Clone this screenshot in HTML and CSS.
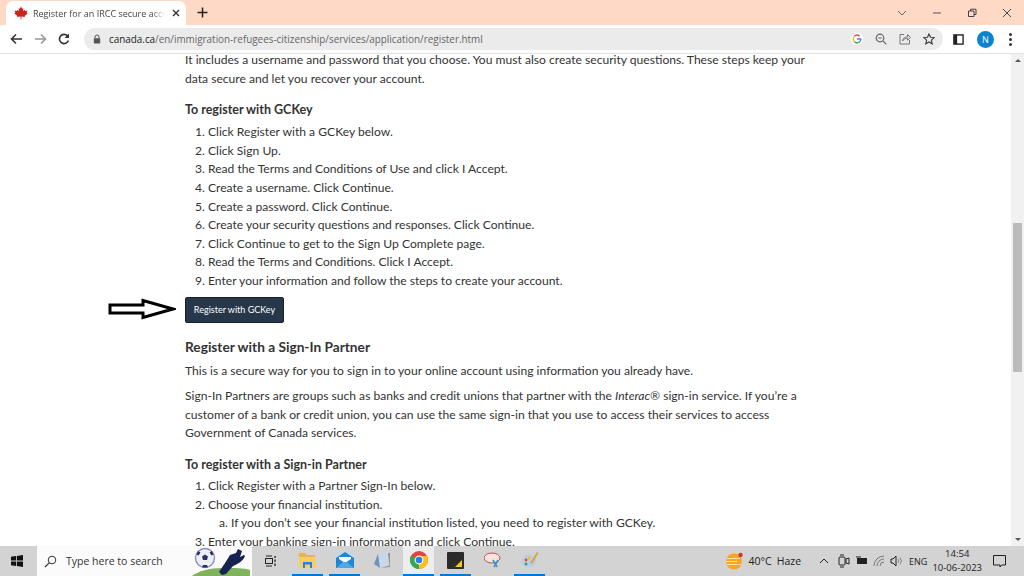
FILE: index.html
```html
<!DOCTYPE html>
<html lang="en">
<head>
    <meta charset="UTF-8">
    <title>Register for an IRCC secure account</title>
    <link rel="stylesheet" href="styles.css">
</head>
<body>
    <div class="screen">
        <div class="tabstrip">
            <div class="tab">
                <svg class="flag" width="14" height="14" viewBox="0 0 14 14"><path d="M7 0.5 8.2 2.8 9.4 2.2 9 5.2 10.6 3.8 11 4.9 13.4 4.6 12.7 6.8 13.6 7.4 10.6 9.9 11 11 7.4 10.6 7.4 13.5 6.6 13.5 6.6 10.6 3 11 3.4 9.9 0.4 7.4 1.3 6.8 0.6 4.6 3 4.9 3.4 3.8 5 5.2 4.6 2.2 5.8 2.8Z" fill="#c8261c"/></svg>
                <span class="tab-title">Register for an IRCC secure account</span>
                <svg class="tab-x" width="8" height="8" viewBox="0 0 8 8"><path d="M1 1 7 7M7 1 1 7" stroke="#333" stroke-width="1.4"/></svg>
            </div>
            <svg class="new-tab" width="11" height="11" viewBox="0 0 11 11"><path d="M5.5 0.5V10.5M0.5 5.5H10.5" stroke="#222" stroke-width="1.5"/></svg>
            <div class="win-controls">
                <svg width="10" height="6" viewBox="0 0 10 6"><path d="M1 1 5 5 9 1" fill="none" stroke="#666" stroke-width="1"/></svg>
                <svg width="10" height="10" viewBox="0 0 10 10"><path d="M1 5H9" stroke="#555" stroke-width="1"/></svg>
                <svg width="10" height="10" viewBox="0 0 10 10"><path d="M1.5 3H7V8.5H1.5ZM3.5 3V1.2H9V6.5H7" fill="none" stroke="#444" stroke-width="1"/></svg>
                <svg width="10" height="10" viewBox="0 0 10 10"><path d="M1 1 9 9M9 1 1 9" stroke="#444" stroke-width="1"/></svg>
            </div>
        </div>

        <div class="toolbar">
            <svg width="13" height="12" viewBox="0 0 13 12"><path d="M12 6H2M6 1.5 1.5 6 6 10.5" fill="none" stroke="#333" stroke-width="1.6"/></svg>
            <svg width="13" height="12" viewBox="0 0 13 12"><path d="M1 6H11M7 1.5 11.5 6 7 10.5" fill="none" stroke="#999" stroke-width="1.6"/></svg>
            <svg width="12" height="12" viewBox="0 0 12 12"><path d="M10.4 7.5A4.6 4.6 0 1 1 9.4 2.8" fill="none" stroke="#333" stroke-width="1.6"/><path d="M11 0.5V5H6.5Z" fill="#333"/></svg>
            <div class="omnibox">
                <svg class="lock" width="8" height="10" viewBox="0 0 8 10"><path d="M2 4.5V3A2 2 0 0 1 6 3V4.5" fill="none" stroke="#555" stroke-width="1"/><rect x="0.8" y="4.2" width="6.4" height="5.2" rx="0.7" fill="#555"/></svg>
                <span class="url"><b>canada.ca</b>/en/immigration-refugees-citizenship/services/application/register.html</span>
                <div class="omni-icons">
                    <svg width="12" height="12" viewBox="0 0 12 12"><circle cx="6" cy="6" r="6" fill="#fff"/><path d="M3.4 3.3A3.8 3.8 0 0 1 8.6 3.2" fill="none" stroke="#e8433a" stroke-width="1.4"/><path d="M3.4 3.3A3.8 3.8 0 0 0 3.4 8.7" fill="none" stroke="#f5b914" stroke-width="1.4"/><path d="M3.4 8.7A3.8 3.8 0 0 0 8.6 8.7" fill="none" stroke="#34a853" stroke-width="1.4"/><path d="M6 6H9.8A3.8 3.8 0 0 1 8.6 8.7" fill="none" stroke="#4285f4" stroke-width="1.4"/></svg>
                    <svg width="12" height="12" viewBox="0 0 12 12"><circle cx="5" cy="5" r="3.8" fill="none" stroke="#666" stroke-width="1.2"/><path d="M8 8 11.3 11.3M3.2 5H6.8" stroke="#666" stroke-width="1.2"/></svg>
                    <svg width="12" height="12" viewBox="0 0 12 12"><path d="M5 1.5H1V11H10.5V7" fill="none" stroke="#777" stroke-width="1"/><path d="M3.5 8C4 5 6 3.8 8.5 3.8V1.5L11.5 4.5 8.5 7.2V5.2C6.5 5.2 5 6 3.5 8Z" fill="none" stroke="#777" stroke-width="1"/></svg>
                    <svg width="12" height="12" viewBox="0 0 12 12"><path d="M6 1 7.5 4.3 11.2 4.7 8.4 7.1 9.2 10.8 6 8.9 2.8 10.8 3.6 7.1 0.8 4.7 4.5 4.3Z" fill="none" stroke="#444" stroke-width="1.2"/></svg>
                </div>
            </div>
            <svg class="side-icon" width="11" height="11" viewBox="0 0 12 12"><rect x="1" y="1" width="10" height="10" fill="#fff" stroke="#222" stroke-width="1.5"/><rect x="1" y="1" width="3.5" height="10" fill="#222"/></svg>
            <div class="avatar">N</div>
            <div class="kebab"><i></i><i></i><i></i></div>
        </div>

        <div class="viewport">
            <main class="page">
                <p class="intro">It includes a username and password that you choose. You must also create security questions. These steps keep your data secure and let you recover your account.</p>
                <h3>To register with GCKey</h3>
                <ol>
                    <li>Click Register with a GCKey below.</li>
                    <li>Click Sign Up.</li>
                    <li>Read the Terms and Conditions of Use and click I Accept.</li>
                    <li>Create a username. Click Continue.</li>
                    <li>Create a password. Click Continue.</li>
                    <li>Create your security questions and responses. Click Continue.</li>
                    <li>Click Continue to get to the Sign Up Complete page.</li>
                    <li>Read the Terms and Conditions. Click I Accept.</li>
                    <li>Enter your information and follow the steps to create your account.</li>
                </ol>
                <div class="btn-row">
                    <svg class="arrow" width="68" height="22" viewBox="0 0 68 22"><path d="M2 7H35V2.5L65 11 35 19.5V15H2Z" fill="#fff" stroke="#000" stroke-width="3"/></svg>
                    <a class="btn">Register with GCKey</a>
                </div>
                <h2>Register with a Sign-In Partner</h2>
                <p>This is a secure way for you to sign in to your online account using information you already have.</p>
                <p>Sign-In Partners are groups such as banks and credit unions that partner with the <em>Interac</em>® sign-in service. If you’re a customer of a bank or credit union, you can use the same sign-in that you use to access their services to access Government of Canada services.</p>
                <h3 class="second">To register with a Sign-in Partner</h3>
                <ol>
                    <li>Click Register with a Partner Sign-In below.</li>
                    <li>Choose your financial institution.
                        <ol class="alpha"><li>If you don’t see your financial institution listed, you need to register with GCKey.</li></ol>
                    </li>
                    <li>Enter your banking sign-in information and click Continue.</li>
                </ol>
            </main>
            <div class="scrollbar">
                <span class="sb-up"></span>
                <div class="sb-track"><div class="sb-thumb"></div></div>
                <span class="sb-down"></span>
            </div>
        </div>

        <div class="taskbar">
            <svg class="start" width="12" height="12" viewBox="0 0 12 12"><path d="M0 1.7 5 1V5.6H0ZM5.8 0.9 12 0V5.6H5.8ZM0 6.4H5V11L0 10.3ZM5.8 6.4H12V12L5.8 11.1Z" fill="#111"/></svg>
            <div class="search">
                <svg width="13" height="13" viewBox="0 0 13 13"><circle cx="8" cy="5" r="3.8" fill="none" stroke="#333" stroke-width="1"/><path d="M5.2 7.8 1 12" stroke="#333" stroke-width="1.2"/></svg>
                <span>Type here to search</span>
                <svg class="search-art" width="60" height="30" viewBox="0 0 60 30"><path d="M0 30C6 25 18 22 30 22 42 22 52 22 58 24V30Z" fill="#7fb35c"/><circle cx="13" cy="12" r="9.5" fill="#eceef8" stroke="#8c90c0" stroke-width="1.4"/><path d="M13 8.5 16 10.5 15 14H11L10 10.5ZM6 5 8.5 6.5 6.5 9.5 4.5 8.5ZM20 5 21.5 8.5 19.5 9.5 17.5 6.5ZM10 21.5 11 19H15L16 21.5Z" fill="#2c3163"/><path d="M27 26C31 20 35 14 38 9L44 7 46 3 50 5 48 11 52 9 53 10C51 15 46 18 41 20L34 28 30 29Z" fill="#16224f"/></svg>
            </div>
            <svg class="task-view" width="12" height="12" viewBox="0 0 12 12"><path d="M2 1H8M2 11H8" stroke="#222"/><rect x="1.5" y="3.5" width="7" height="5" fill="none" stroke="#222"/><path d="M11 1V3M11 4.5V7M11 8.5V11" stroke="#222" stroke-width="1.3"/></svg>
            <div class="task-apps">
                <div class="app open"><svg width="17" height="15" viewBox="0 0 17 15"><path d="M0 0H6L8 2H16V5H0Z" fill="#e9b44c"/><path d="M0 4H17V15H0Z" fill="#f8cf5f"/><path d="M4 9H13V15H11V11.5H6V15H4Z" fill="#1f87d8"/></svg></div>
                <div class="app open"><svg width="18" height="16" viewBox="0 0 18 16"><path d="M0 6 9 0 18 6V16H0Z" fill="#1b87d6"/><path d="M3 5H15V7L9 11 3 7Z" fill="#fff"/><path d="M0 16 7 10H11L18 16Z" fill="#4fa8e8"/></svg></div>
                <div class="app"><svg width="16" height="17" viewBox="0 0 16 17"><path d="M4 2 15 0 16 13 6 16Z" fill="#c6d8ea"/><path d="M0 12 4 2 6 16Z" fill="#6f93b8"/><path d="M14 1 15.5 13.5 7 16 16 15 16 1Z" fill="#9a8f80"/></svg></div>
                <div class="app open active"><svg width="18" height="18" viewBox="0 0 18 18"><circle cx="9" cy="9" r="9" fill="#e8433a"/><path d="M9 9 1.2 4.5A9 9 0 0 0 9 18Z" fill="#34a853"/><path d="M9 9 9 18A9 9 0 0 0 17 5H9Z" fill="#fbc116"/><circle cx="9" cy="9" r="4.4" fill="#fff"/><circle cx="9" cy="9" r="3.3" fill="#2a7de1"/></svg></div>
                <div class="app open"><svg width="17" height="17" viewBox="0 0 17 17"><rect width="17" height="17" rx="1" fill="#2b2b2b"/><path d="M8 15 15 8V15Z" fill="#f7c51e"/></svg></div>
                <div class="app"><svg width="17" height="16" viewBox="0 0 17 16"><ellipse cx="8" cy="6" rx="8" ry="5" fill="#f4e3df" stroke="#c05050"/><path d="M9 8 13 15M14 8 10 15" stroke="#3a8fd0" stroke-width="1.6"/></svg></div>
                <div class="app open"><svg width="18" height="18" viewBox="0 0 18 18"><ellipse cx="8" cy="10" rx="7.5" ry="6.5" fill="#b8cfe6"/><circle cx="5" cy="9" r="1.4" fill="#e8433a"/><circle cx="8" cy="7" r="1.4" fill="#f5b914"/><circle cx="5" cy="13" r="1.4" fill="#34a853"/><path d="M9 12 16 1 17.5 2 11 13Z" fill="#d9a441"/></svg></div>
            </div>
            <div class="tray">
                <svg class="weather" width="18" height="18" viewBox="0 0 18 18"><circle cx="9" cy="9.5" r="8" fill="#f5a623"/><path d="M2 6.5H15M1 9.5H12M2 12.5H16" stroke="#fbe2b0" stroke-width="1.2"/><circle cx="15.5" cy="3" r="2.2" fill="#d8322a"/></svg>
                <span class="temp">40°C</span>
                <span class="haze">Haze</span>
                <svg class="tray-first" width="10" height="6" viewBox="0 0 10 6"><path d="M1 5 5 1 9 5" fill="none" stroke="#222" stroke-width="1"/></svg>
                <svg width="12" height="14" viewBox="0 0 12 14"><rect x="1" y="3" width="6" height="8" rx="1" fill="none" stroke="#222"/><path d="M8 5 11 4V10L8 9ZM2 1H6M2 13H6" fill="none" stroke="#222"/></svg>
                <svg width="13" height="10" viewBox="0 0 13 10"><rect x="2" y="2" width="10" height="6" fill="#222"/><path d="M1 1H6" stroke="#222"/></svg>
                <svg width="12" height="12" viewBox="0 0 12 12"><path d="M1 11A10 10 0 0 1 11 1M4 11A7 7 0 0 1 11 4M7 11A4 4 0 0 1 11 7" fill="none" stroke="#777"/></svg>
                <svg width="13" height="12" viewBox="0 0 13 12"><path d="M1 4H3L6 1V11L3 8H1Z" fill="none" stroke="#222"/><path d="M8 4A3 3 0 0 1 8 8M10 2.5A5.5 5.5 0 0 1 10 9.5" fill="none" stroke="#888"/></svg>
                <span class="lang">ENG</span>
                <div class="clock"><span>14:54</span><span>10-06-2023</span></div>
                <svg class="notify" width="13" height="13" viewBox="0 0 13 13"><path d="M0.5 0.5H12.5V10H8.5L7 12V10H0.5Z" fill="none" stroke="#222"/></svg>
            </div>
        </div>
    </div>
</body>
</html>
```

FILE: styles.css
```css
* {
    margin: 0;
    padding: 0;
    box-sizing: border-box;
}
body {
    width: 1024px;
    height: 576px;
    overflow: hidden;
    background-color: #fff;
}
svg {
    display: block;
    flex-shrink: 0;
}
.screen {
    height: 576px;
    display: flex;
    flex-direction: column;
    font-family: "Open Sans", sans-serif;
}

.tabstrip {
    height: 25px;
    background-color: #fdd9c6;
    display: flex;
    align-items: flex-end;
    padding-left: 6px;
}
.tab {
    width: 180px;
    height: 24px;
    background-color: #fff;
    border-radius: 7px 7px 0 0;
    display: flex;
    align-items: center;
    padding-left: 8px;
    gap: 5px;
}
.tab-title {
    width: 132px;
    overflow: hidden;
    white-space: nowrap;
    font-size: 9px;
    color: #444;
    -webkit-mask-image: linear-gradient(to right, #000 90%, transparent);
    mask-image: linear-gradient(to right, #000 90%, transparent);
}
.tab-x {
    margin-left: 2px;
}
.new-tab {
    margin: 0 0 7px 11px;
}
.win-controls {
    margin-left: auto;
    height: 25px;
    display: flex;
    align-items: center;
    padding-right: 12px;
    gap: 25px;
}

.toolbar {
    height: 29px;
    background-color: #fff;
    border-bottom: 1px solid #e2e2e2;
    display: flex;
    align-items: center;
    padding-left: 10px;
    gap: 11px;
}
.omnibox {
    width: 859px;
    height: 22px;
    margin-left: 3px;
    background-color: #ebebeb;
    border-radius: 11px;
    display: flex;
    align-items: center;
    padding: 0 8px 0 9px;
    gap: 8px;
}
.url {
    font-size: 9.9px;
    color: #666;
    white-space: nowrap;
}
.url b {
    font-weight: 400;
    color: #222;
}
.omni-icons {
    margin-left: auto;
    display: flex;
    align-items: center;
    gap: 12px;
}
.side-icon {
    margin-left: -1px;
}
.avatar {
    width: 17px;
    height: 17px;
    margin-left: 2px;
    border-radius: 50%;
    background-color: #0a84d0;
    color: #fff;
    font-size: 9px;
    text-align: center;
    line-height: 17px;
}
.kebab {
    display: flex;
    flex-direction: column;
    gap: 2px;
    margin-left: 4px;
}
.kebab i {
    display: block;
    width: 3px;
    height: 3px;
    border-radius: 50%;
    background-color: #333;
}

.viewport {
    flex: 1;
    min-height: 0;
    display: flex;
    overflow: hidden;
}
.page {
    flex: 1;
    overflow: hidden;
    padding: 0 0 0 185px;
    font-family: Lato, sans-serif;
    font-size: 12.1px;
    line-height: 18.6px;
    color: #333;
}
.page p {
    width: 630px;
    margin-bottom: 7px;
}
.page .intro {
    margin-top: -3px;
    margin-bottom: 12px;
}
h3 {
    font-size: 12.5px;
    font-weight: 700;
    line-height: 19px;
    margin-bottom: 4px;
}
h3.second {
    margin-top: 12px;
    margin-bottom: 3px;
}
h2 {
    font-size: 13.7px;
    font-weight: 700;
    line-height: 20px;
    margin: 14px 0 5px;
}
ol {
    padding-left: 23px;
    width: 630px;
}
ol.alpha {
    list-style-type: lower-alpha;
}
.btn-row {
    position: relative;
    margin-top: 6px;
}
.arrow {
    position: absolute;
    left: -77px;
    top: 1px;
}
.btn {
    display: inline-block;
    width: 99px;
    height: 26px;
    background-color: #26374a;
    border: 1px solid #16212e;
    border-radius: 2px;
    color: #fff;
    font-size: 9px;
    line-height: 24px;
    text-align: center;
    vertical-align: top;
}

.scrollbar {
    width: 13px;
    background-color: #f1f1f1;
    display: flex;
    flex-direction: column;
    align-items: center;
}
.sb-up, .sb-down {
    width: 0;
    height: 0;
    margin: 5px 0;
    border-left: 3px solid transparent;
    border-right: 3px solid transparent;
}
.sb-up {
    border-bottom: 3px solid #555;
}
.sb-down {
    border-top: 3px solid #555;
}
.sb-track {
    flex: 1;
    width: 100%;
    padding: 156px 2px 0;
}
.sb-thumb {
    height: 149px;
    background-color: #bbb;
}

.taskbar {
    height: 30px;
    background-color: #d3d3d3;
    display: flex;
    align-items: center;
    color: #222;
}
.start {
    margin-left: 11px;
}
.search {
    width: 215px;
    height: 30px;
    margin-left: 14px;
    background-color: #fbfbfb;
    display: flex;
    align-items: center;
    padding-left: 7px;
    gap: 9px;
    font-size: 10.5px;
    color: #333;
    position: relative;
}
.search-art {
    position: absolute;
    right: 0;
    bottom: 0;
}
.task-view {
    margin-left: 12px;
}
.task-apps {
    display: flex;
    margin-left: 16px;
    gap: 6px;
}
.app {
    width: 31px;
    height: 30px;
    display: flex;
    align-items: center;
    justify-content: center;
    border-bottom: 2px solid transparent;
}
.app.open {
    border-bottom-color: #0078d7;
}
.app.active {
    background-color: #ededed;
}
.tray {
    margin-left: auto;
    display: flex;
    align-items: center;
    font-size: 10px;
    padding-right: 18px;
    gap: 5px;
}
.weather {
    margin-right: 1px;
}
.temp {
    font-size: 10.5px;
}
.haze {
    font-size: 10.5px;
}
.tray-first {
    margin-left: 13px;
    margin-right: 4px;
}
.lang {
    font-size: 9px;
    margin-left: 1px;
}
.clock {
    display: flex;
    flex-direction: column;
    align-items: center;
    font-size: 9.5px;
    line-height: 14px;
}
.notify {
    margin-left: 6px;
}
```
